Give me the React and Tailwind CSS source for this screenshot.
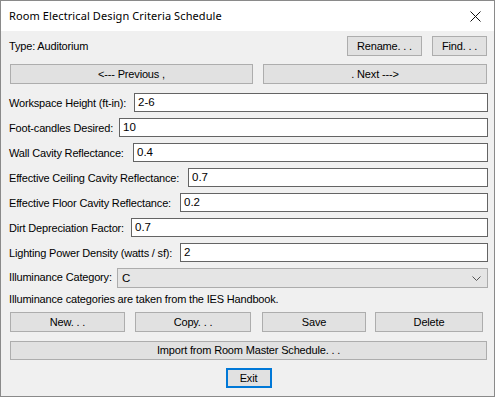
import React from "react";

function Btn({ className = "", children }) {
  return (
    <div
      className={
        "flex items-center justify-center bg-[#e1e1e1] border border-[#adadad] text-[11px] tracking-[-0.17px] text-black " +
        className
      }
    >
      {children}
    </div>
  );
}

function Field({ label, labelClass, value }) {
  return (
    <div className="flex items-center h-[19px]">
      <div className={"shrink-0 text-[11px] tracking-[-0.17px] text-black pt-[1px] whitespace-nowrap " + labelClass}>
        {label}
      </div>
      <div className="flex-1 h-[19px] bg-white border border-[#646464] flex items-center pl-[3px] text-[11.5px] text-black">
        {value}
      </div>
    </div>
  );
}

export default function App() {
  return (
    <div className="w-[495px] h-[397px] border border-[#8a8a8a] bg-[#f0f0f0] flex flex-col font-['Liberation_Sans',Arial,sans-serif]">
      <div className="h-[30px] bg-white flex items-center justify-between pl-[8px] pr-[12px]">
        <div className="text-[11px] tracking-[0.1px] text-black font-['Noto_Sans',sans-serif]">
          Room Electrical Design Criteria Schedule
        </div>
        <svg width="11" height="11" viewBox="0 0 11 11" className="mr-[1px]">
          <path d="M0.5 0.5 L10.5 10.5 M10.5 0.5 L0.5 10.5" stroke="#111" strokeWidth="1" />
        </svg>
      </div>
      <div className="flex flex-col pl-[8px] pr-[6px] pt-[5px]">
        <div className="flex items-center h-[20px]">
          <div className="flex-1 text-[11px] tracking-[-0.17px] text-black">Type: Auditorium</div>
          <Btn className="w-[75px] h-[20px]">Rename. . .</Btn>
          <Btn className="w-[55px] h-[20px] ml-[10px] mr-[1px]">Find. . .</Btn>
        </div>
        <div className="flex items-center h-[20px] mt-[8px] ml-[1px]">
          <Btn className="w-[243px] h-[20px]">&lt;--- Previous ,</Btn>
          <Btn className="w-[224px] h-[20px] ml-[10px]">. Next ---&gt;</Btn>
        </div>
        <div className="flex flex-col gap-[6px] mt-[9px]">
          <Field label="Workspace Height (ft-in):" labelClass="w-[125px]" value="2-6" />
          <Field label="Foot-candles Desired:" labelClass="w-[110px]" value="10" />
          <Field label="Wall Cavity Reflectance:" labelClass="w-[124px]" value="0.4" />
          <Field label="Effective Ceiling Cavity Reflectance:" labelClass="w-[179px]" value="0.7" />
          <Field label="Effective Floor Cavity Reflectance:" labelClass="w-[171px]" value="0.2" />
          <Field label="Dirt Depreciation Factor:" labelClass="w-[122px]" value="0.7" />
          <Field label="Lighting Power Density (watts / sf):" labelClass="w-[171px]" value="2" />
          <div className="flex items-start h-[20px]">
            <div className="shrink-0 w-[108px] text-[11px] tracking-[-0.17px] text-black mt-[1px] whitespace-nowrap">
              Illuminance Category:
            </div>
            <div className="flex-1 h-[20px] bg-[#e5e5e5] border border-[#acacac] flex items-center justify-between pl-[4px] pr-[6px] text-[11.5px] text-black">
              <span className="pt-[2px]">C</span>
              <svg width="9" height="5" viewBox="0 0 9 5">
                <path d="M0.5 0.5 L4.5 4.5 L8.5 0.5" stroke="#555" strokeWidth="1" fill="none" />
              </svg>
            </div>
          </div>
        </div>
        <div className="text-[11px] tracking-[-0.17px] text-black mt-[5px] h-[13px] leading-[13px]">
          Illuminance categories are taken from the IES Handbook.
        </div>
        <div className="flex items-center mt-[6px] ml-[1px] h-[20px]">
          <Btn className="w-[115px] h-[20px]">New. . .</Btn>
          <Btn className="w-[116px] h-[20px] ml-[10px]">Copy. . .</Btn>
          <Btn className="w-[104px] h-[20px] ml-[11px]">Save</Btn>
          <Btn className="w-[108px] h-[20px] ml-[9px]">Delete</Btn>
        </div>
        <Btn className="w-[477px] h-[19px] mt-[9px] ml-[1px]">Import from Room Master Schedule. . .</Btn>
        <div className="flex justify-center mt-[8px]">
          <div className="w-[46px] h-[20px] border-2 border-[#0078d7] bg-[#e1e1e1] flex items-center justify-center text-[11px] tracking-[-0.17px] text-black">
            Exit
          </div>
        </div>
      </div>
    </div>
  );
}
